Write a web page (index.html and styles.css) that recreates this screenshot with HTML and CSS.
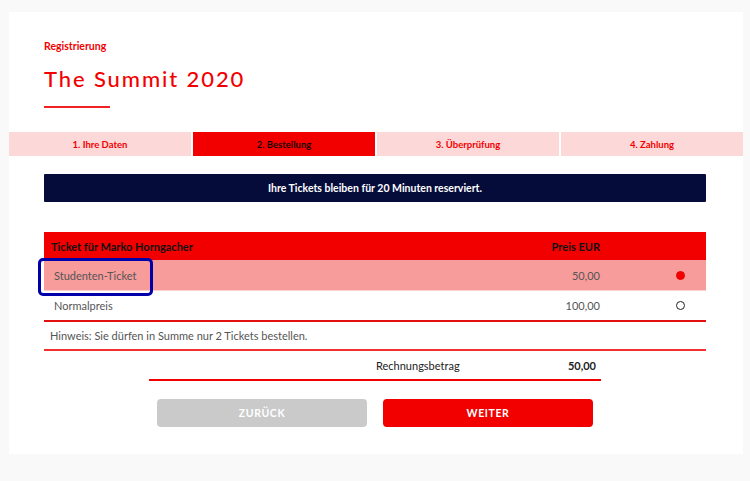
FILE: index.html
```html
<!DOCTYPE html>
<html lang="de">
<head>
<meta charset="utf-8">
<title>The Summit 2020 – Registrierung</title>
<link rel="stylesheet" href="styles.css">
</head>
<body>
<div class="card">
  <header class="head">
    <div class="kicker">Registrierung</div>
    <h1 class="title">The Summit 2020</h1>
    <div class="rule"></div>
  </header>
  <nav class="steps">
    <div class="step">1. Ihre Daten</div>
    <div class="step active">2. Bestellung</div>
    <div class="step">3. Überprüfung</div>
    <div class="step">4. Zahlung</div>
  </nav>
  <main class="body">
    <div class="banner">Ihre Tickets bleiben für 20 Minuten reserviert.</div>
    <div class="table">
      <div class="row thead">
        <div class="c-name">Ticket für Marko Horngacher</div>
        <div class="c-price">Preis EUR</div>
        <div class="c-radio"></div>
      </div>
      <div class="row selected">
        <div class="c-name ticket">Studenten-Ticket</div>
        <div class="c-price">50,00</div>
        <div class="c-radio"><span class="dot on"></span></div>
        <div class="highlight"></div>
      </div>
      <div class="row last">
        <div class="c-name ticket">Normalpreis</div>
        <div class="c-price">100,00</div>
        <div class="c-radio"><span class="dot"></span></div>
      </div>
      <div class="note">Hinweis: Sie dürfen in Summe nur 2 Tickets bestellen.</div>
    </div>
    <div class="total">
      <div class="t-label">Rechnungsbetrag</div>
      <div class="t-value">50,00</div>
    </div>
    <div class="actions">
      <button class="btn back">ZURÜCK</button>
      <button class="btn next">WEITER</button>
    </div>
  </main>
</div>
</body>
</html>
```
FILE: styles.css
```css
* { box-sizing: border-box; }
html, body { margin: 0; }
body {
  background: #f9f9f9;
  font-family: "Lato", "Liberation Sans", sans-serif;
  padding: 12px 7px 0 9px;
  width: 750px;
  height: 481px;
  overflow: hidden;
}
.card {
  background: #fff;
  width: 734px;
  height: 442px;
}
.head {
  padding: 27px 35px 0 35px;
  height: 120px;
}
.kicker {
  color: #f20000;
  font-size: 10.5px;
  font-weight: 700;
  line-height: 14px;
}
.title {
  margin: 13px 0 0 0;
  color: #f20000;
  font-size: 22px;
  font-weight: 500;
  letter-spacing: 1.9px;
  line-height: 26px;
}
.rule {
  margin-top: 14px;
  width: 66px;
  height: 2px;
  background: #f22222;
}
.steps {
  display: grid;
  grid-template-columns: repeat(4, 1fr);
  gap: 2px;
  height: 24px;
}
.step {
  background: #fdd8d8;
  color: #f20000;
  font-size: 9.5px;
  font-weight: 700;
  display: flex;
  align-items: center;
  justify-content: center;
}
.step.active {
  background: #f20000;
  color: #1a0000;
}
.body {
  padding: 18px 37px 0 35px;
}
.banner {
  background: #050c3a;
  color: #fff;
  font-size: 10.5px;
  font-weight: 700;
  height: 28px;
  display: flex;
  align-items: center;
  justify-content: center;
  border-radius: 1px;
}
.table {
  margin-top: 30px;
}
.row {
  position: relative;
  display: grid;
  grid-template-columns: 1fr 120px 106px;
  align-items: center;
  height: 31px;
  font-size: 11px;
  color: #555;
}
.thead {
  height: 28px;
  background: #f20000;
  color: #111;
  font-weight: 700;
}
.c-name { padding-left: 7px; }
.ticket { padding-left: 10px; }
.c-price { text-align: right; }
.c-radio { display: flex; justify-content: center; padding-left: 54px; }
.selected {
  background: #f79b9b;
  border-bottom: 1px solid #fbd0d0;
}
.last {
  border-bottom: 2px solid #e41010;
}
.dot {
  width: 9px;
  height: 9px;
  border-radius: 50%;
  border: 1.5px solid #222;
}
.dot.on {
  background: #f20000;
  border-color: #f20000;
}
.highlight {
  position: absolute;
  left: -6px;
  top: -2px;
  width: 115px;
  height: 38px;
  border: 3px solid #0000aa;
  border-radius: 5px;
}
.note {
  height: 29px;
  display: flex;
  align-items: center;
  padding-left: 6px;
  font-size: 11px;
  color: #555;
  border-bottom: 2px solid #f23030;
}
.total {
  margin: 0 105px 0 105px;
  height: 30px;
  display: grid;
  grid-template-columns: 1fr 92px 133px;
  align-items: center;
  font-size: 11px;
  color: #222;
  border-bottom: 2px solid #f20000;
}
.t-label { grid-column: 2; white-space: nowrap; }
.t-value { grid-column: 3; text-align: right; padding-right: 5px; font-weight: 700; }
.actions {
  margin-top: 18px;
  display: flex;
  justify-content: center;
  gap: 16px;
}
.btn {
  width: 210px;
  height: 28px;
  border: none;
  border-radius: 4px;
  color: #fff;
  font-family: inherit;
  font-size: 10.5px;
  font-weight: 700;
  letter-spacing: 0.6px;
}
.back { background: #cacaca; }
.next { background: #f20000; }
```
